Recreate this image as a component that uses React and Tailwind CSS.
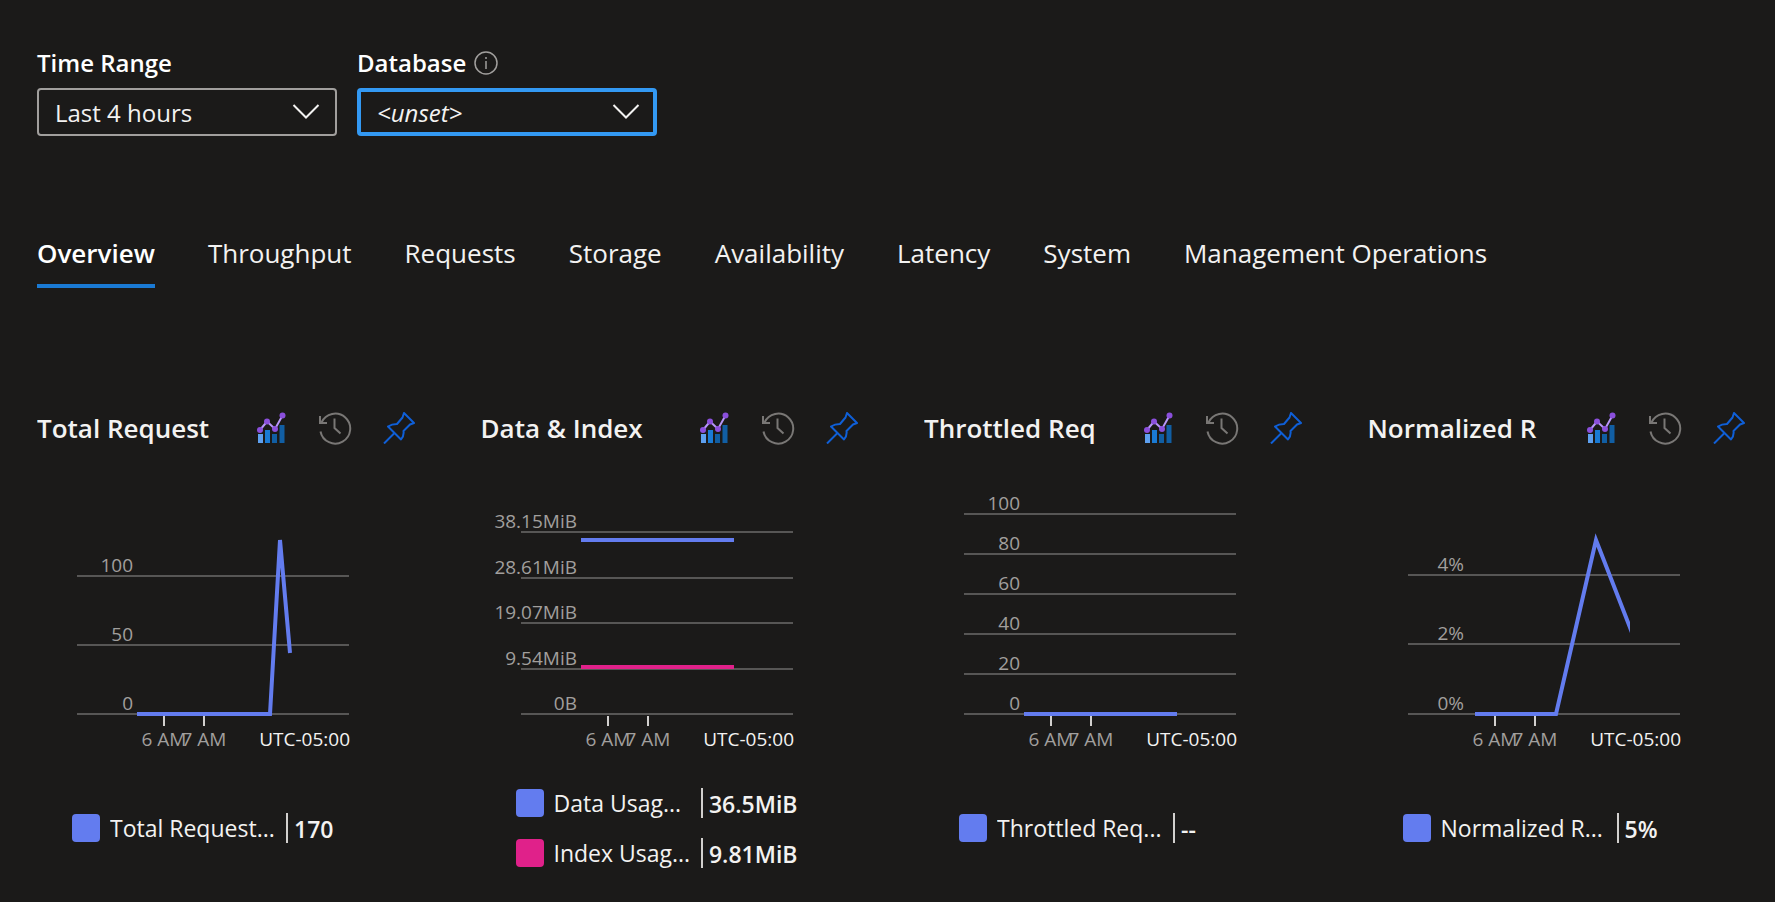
const BLUE = '#637cef';
const PINK = '#e0218a';

const TABS = ['Overview', 'Throughput', 'Requests', 'Storage', 'Availability', 'Latency', 'System', 'Management Operations'];

const CARDS = [
  {
    title: 'Total Request',
    grid: [[96, '100'], [165, '50'], [234, '0']],
    series: [{ color: BLUE, points: '100,234 233,234 243,60 253,173', miter: 4 }],
    legend: [{ color: BLUE, label: 'Total Request...', value: '170' }],
  },
  {
    title: 'Data & Index',
    grid: [[52, '38.15MiB'], [98, '28.61MiB'], [143, '19.07MiB'], [189, '9.54MiB'], [234, '0B']],
    series: [
      { color: BLUE, points: '100,60 253,60', miter: 4 },
      { color: PINK, points: '100,187 253,187', miter: 4 },
    ],
    legend: [
      { color: BLUE, label: 'Data Usag...', value: '36.5MiB' },
      { color: PINK, label: 'Index Usag...', value: '9.81MiB' },
    ],
  },
  {
    title: 'Throttled Req',
    grid: [[34, '100'], [74, '80'], [114, '60'], [154, '40'], [194, '20'], [234, '0']],
    series: [{ color: BLUE, points: '100,234 253,234', miter: 4 }],
    legend: [{ color: BLUE, label: 'Throttled Req...', value: '--' }],
  },
  {
    title: 'Normalized R',
    grid: [[95, '4%'], [164, '2%'], [234, '0%']],
    series: [{ color: BLUE, points: '107,234 188,234 228,60 268,163', miter: 10 }],
    legend: [{ color: BLUE, label: 'Normalized R...', value: '5%' }],
    clip: 262,
  },
];

function Chevron() {
  return (
    <svg className="pointer-events-none absolute right-[17px] top-1/2 -translate-y-1/2" width="28" height="16" viewBox="0 0 28 16" fill="none" stroke="#f3f2f1" strokeWidth="2" aria-hidden="true">
      <path d="M1.5 1 L14 13.5 L26.5 1" />
    </svg>
  );
}

function InfoIcon() {
  return (
    <svg width="24" height="24" viewBox="0 0 24 24" fill="none" stroke="#a19f9d" strokeWidth="1.5" aria-hidden="true">
      <circle cx="12" cy="12" r="11" />
      <path d="M12 10v8" />
      <path d="M12 6v2" />
    </svg>
  );
}

function MetricsIcon() {
  return (
    <svg width="30" height="32" viewBox="0 0 30 32" aria-hidden="true">
      <rect x="1" y="22" width="5" height="9" fill="#5ea0ef" />
      <rect x="8" y="18" width="5" height="13" fill="#1a7ad4" />
      <rect x="15" y="22" width="5" height="9" fill="#115ea3" />
      <rect x="22.500" y="13" width="5" height="18" fill="#115ea3" />
      <path d="M3 18 L10 9.500 L18 17 L25.500 3.500" fill="none" stroke="#b796f9" strokeWidth="2" />
      <g fill="#8b4fdc">
        <circle cx="3" cy="18" r="3" />
        <circle cx="10" cy="9.500" r="3" />
        <circle cx="18" cy="17" r="3" />
        <circle cx="25.500" cy="3.500" r="3" />
      </g>
    </svg>
  );
}

function HistoryIcon() {
  return (
    <svg width="34" height="34" viewBox="0 0 34 34" fill="none" stroke="#797775" strokeWidth="2" aria-hidden="true">
      <path d="M3.500 11.500 A15 15 0 1 1 2.500 20.500" />
      <path d="M2 5 V12 H9" />
      <path d="M16.500 7.500 V17 L22.500 22.500" />
    </svg>
  );
}

function PinIcon() {
  return (
    <svg width="32" height="32" viewBox="0 0 32 32" fill="none" stroke="#0f5fd7" strokeWidth="2" strokeLinejoin="round" aria-hidden="true">
      <path d="M21 1 L31 11 L27 12.500 L20.500 19 C21 22 20 25 18 27.500 L5 14.500 C8 12.500 11 12 14 12 L19.500 5.500 Z" />
      <path d="M11.500 21 L1 31.500" />
    </svg>
  );
}

function Chart({ card, id }) {
  return (
    <svg width="320" height="280" viewBox="0 0 320 280" role="img" aria-label={card.title} className="font-['Open_Sans','Noto_Sans',sans-serif] text-[19px]">
      {card.grid.map(([y, label]) => (
        <g key={label}>
          <rect x="40" y={y - 1} width="272" height="2" fill="#575655" />
          <text x="96" y={y - 4} textAnchor="end" fill="#a19f9d">{label}</text>
        </g>
      ))}
      <clipPath id={id}>
        <rect x="0" y="0" width={card.clip || 320} height="280" />
      </clipPath>
      <g clipPath={`url(#${id})`}>
        {card.series.map((s) => (
          <polyline key={s.color} points={s.points} fill="none" stroke={s.color} strokeWidth="4" strokeMiterlimit={s.miter} />
        ))}
      </g>
      <rect x="126" y="236" width="2" height="10" fill="#d2d0ce" />
      <rect x="166" y="236" width="2" height="10" fill="#d2d0ce" />
      <text x="127" y="266" textAnchor="middle" fill="#a19f9d">6 AM</text>
      <text x="167" y="266" textAnchor="middle" fill="#a19f9d">7 AM</text>
      <text x="313" y="266" textAnchor="end" fill="#f3f2f1">UTC-05:00</text>
    </svg>
  );
}

function Card({ card, id }) {
  return (
    <section className="min-w-0">
      <header className="flex h-10 items-center justify-between">
        <h2 className="w-[176px] overflow-hidden whitespace-nowrap text-[26px] font-semibold leading-10">{card.title}</h2>
        <div className="flex items-center gap-[31px]">
          <button type="button" aria-label="Open in metrics"><MetricsIcon /></button>
          <button type="button" aria-label="View history"><HistoryIcon /></button>
          <button type="button" aria-label="Pin to dashboard"><PinIcon /></button>
        </div>
      </header>
      <div className="mt-8"><Chart card={card} id={id} /></div>
      <ul className="ml-[35px] mt-[18px] flex h-[100px] w-[282px] flex-col justify-center">
        {card.legend.map((item) => (
          <li key={item.label} className="flex h-[50px] items-center">
            <span className="mr-[10px] size-7 shrink-0 rounded" style={{ backgroundColor: item.color }} />
            <span className="w-[176px] min-w-0 overflow-hidden whitespace-nowrap text-[23px] leading-8">{item.label}</span>
            <span className="h-[30px] w-[2px] shrink-0 bg-[#d2d0ce]" />
            <span className="ml-[6px] pt-[2px] text-[23px] font-semibold leading-8">{item.value}</span>
          </li>
        ))}
      </ul>
    </section>
  );
}

export default function App() {
  return (
    <main className="min-h-screen bg-[#1b1a19] pb-6 pl-[37px] pr-[30px] pt-[45px] font-['Open_Sans','Noto_Sans',sans-serif] text-[#f3f2f1]">
      <form className="flex flex-wrap gap-5">
        <div className="w-[300px]">
          <label htmlFor="range" className="flex h-9 items-center text-2xl font-semibold leading-9 text-white">Time Range</label>
          <div className="relative mt-[7px]">
            <select id="range" defaultValue="4h" className="h-12 w-full appearance-none rounded border-2 border-[#a19f9d] bg-[#1b1a19] pl-4 pr-12 pt-[2px] text-2xl outline-none">
              <option value="4h">Last 4 hours</option>
            </select>
            <Chevron />
          </div>
        </div>
        <div className="w-[300px]">
          <div className="flex h-9 items-center gap-2">
            <label htmlFor="database" className="text-2xl font-semibold leading-9 text-white">Database</label>
            <InfoIcon />
          </div>
          <div className="relative mt-[7px]">
            <select id="database" defaultValue="unset" className="h-12 w-full appearance-none rounded border-4 border-[#3399f3] bg-[#1b1a19] pl-4 pr-12 pt-[2px] text-2xl italic outline-none">
              <option value="unset">&lt;unset&gt;</option>
            </select>
            <Chevron />
          </div>
        </div>
      </form>

      <div role="tablist" className="mt-[84px] flex gap-[53px]">
        {TABS.map((tab, i) => (
          <button
            key={tab}
            type="button"
            role="tab"
            aria-selected={i === 0}
            className={
              i === 0
                ? 'h-[68px] whitespace-nowrap border-b-4 border-[#1a7ad4] pt-[3px] text-[26px] font-semibold text-white'
                : 'h-[68px] whitespace-nowrap border-b-4 border-transparent pt-[3px] text-[26px]'
            }
          >
            {tab}
          </button>
        ))}
      </div>

      <div className="mt-[120px] grid grid-cols-4 gap-[66px]">
        {CARDS.map((card, i) => (
          <Card key={card.title} card={card} id={`plot-${i}`} />
        ))}
      </div>
    </main>
  );
}
